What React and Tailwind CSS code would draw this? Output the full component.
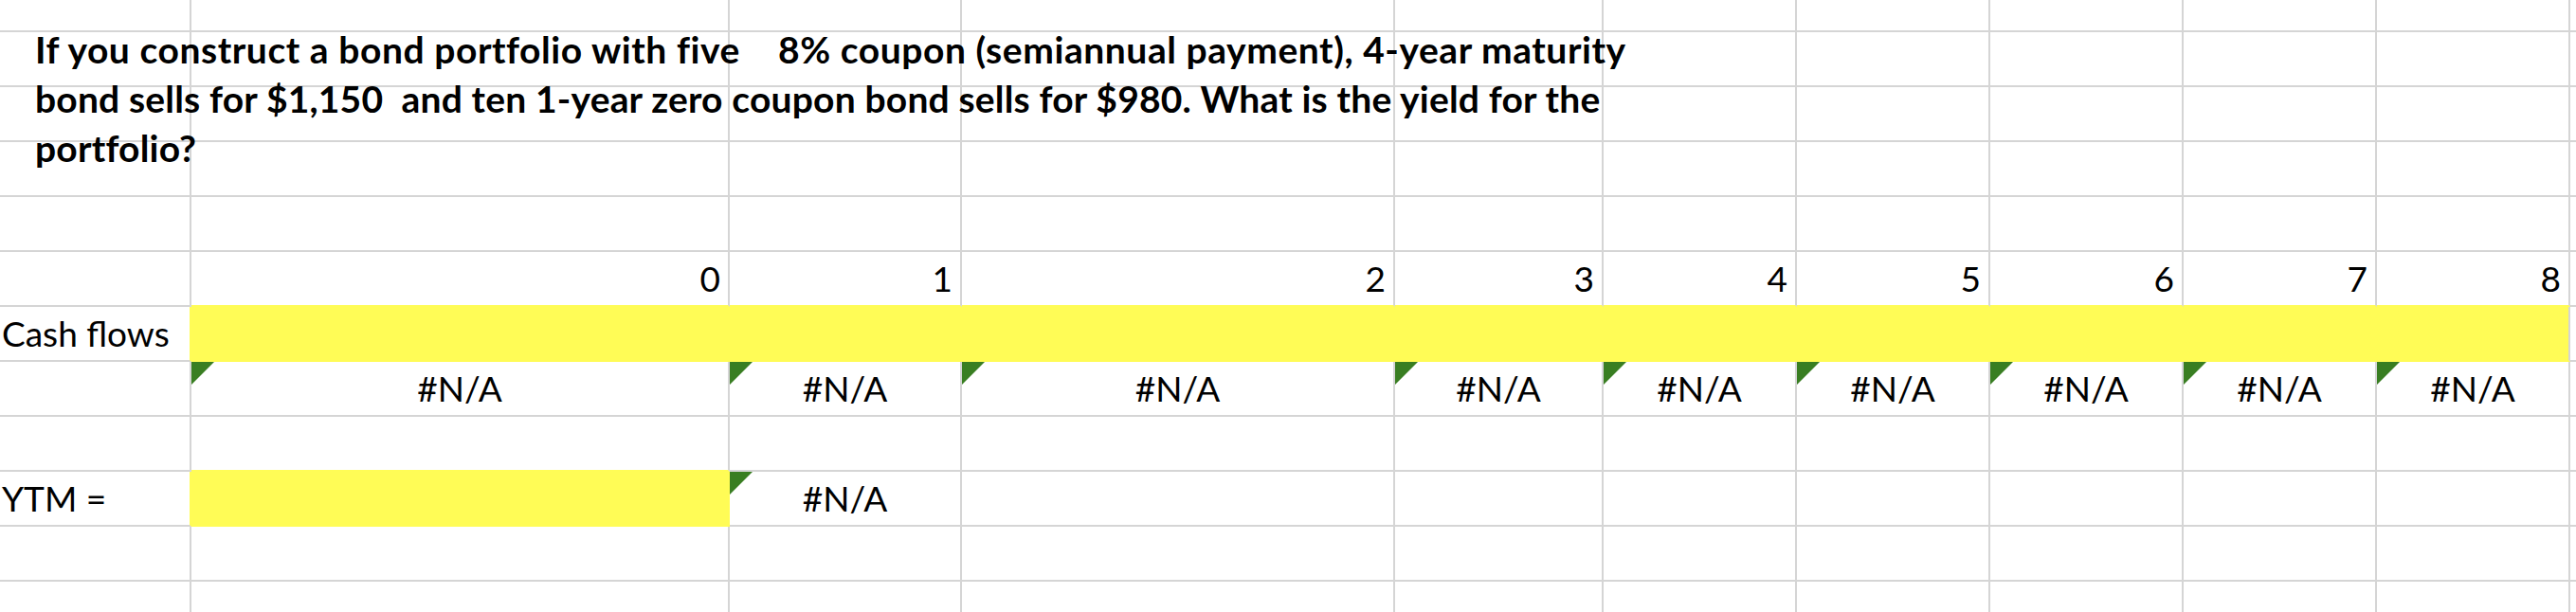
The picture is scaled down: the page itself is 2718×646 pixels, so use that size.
import React from "react";

// column widths include the 2px right gridline
const COLS = 11;
const ROWS = 12;

const title = [
  { text: "If you construct a bond portfolio with five    8% coupon (semiannual payment), 4-year maturity", cls: "tracking-[0.56px]" },
  { text: "bond sells for $1,150  and ten 1-year zero coupon bond sells for $980. What is the yield for the", cls: "tracking-[0.18px]" },
  { text: "portfolio?", cls: "tracking-[0.2px]" },
];

function Flag() {
  return (
    <svg className="absolute left-0 top-0" width="24" height="24" viewBox="0 0 24 24">
      <polygon points="0,0 24,0 0,24" fill="#397e22" />
    </svg>
  );
}

function cellFor(r, c) {
  const cell = { text: null, align: "left", yellow: false, flag: false, rYellow: false, bYellow: false };
  // period numbers
  if (r === 5 && c >= 1 && c <= 9) {
    cell.text = String(c - 1);
    cell.align = "right";
    cell.bYellow = true;
  }
  if (r === 6) {
    if (c === 0) {
      cell.text = "Cash flows";
      cell.rYellow = true;
    }
    if (c >= 1 && c <= 9) {
      cell.yellow = true;
      cell.bYellow = true;
      cell.rYellow = c !== 9;
    }
  }
  if (r === 7 && c >= 1 && c <= 9) {
    cell.text = "#N/A";
    cell.align = "center";
    cell.flag = true;
  }
  if (r === 8 && c === 1) cell.bYellow = true;
  if (r === 9) {
    if (c === 0) {
      cell.text = "YTM =";
      cell.rYellow = true;
    }
    if (c === 1) {
      cell.yellow = true;
      cell.rYellow = true;
      cell.bYellow = true;
    }
    if (c === 2) {
      cell.text = "#N/A";
      cell.align = "center";
      cell.flag = true;
    }
  }
  return cell;
}

function Cell({ r, c }) {
  const cell = cellFor(r, c);
  const lastCol = c === COLS - 1;
  const lastRow = r === ROWS - 1;
  const justify =
    cell.align === "right" ? "justify-end pr-[8px]" : cell.align === "center" ? "justify-center" : "justify-start pl-[2px]";
  return (
    <div
      className={[
        "relative flex items-end pb-[10px] overflow-visible whitespace-nowrap",
        justify,
        lastCol ? "" : "border-r-2",
        lastRow ? "" : "border-b-2",
        cell.rYellow ? "border-r-[#fffc56]" : "border-r-[#d5d5d5]",
        cell.bYellow ? "border-b-[#fffc56]" : "border-b-[#d5d5d5]",
        cell.yellow ? "bg-[#fffc56]" : "bg-white",
      ].join(" ")}
    >
      {cell.flag && <Flag />}
      {cell.text && <span className="text-[37px] leading-none">{cell.text}</span>}
    </div>
  );
}

export default function App() {
  const cells = [];
  for (let r = 0; r < ROWS; r++) {
    for (let c = 0; c < COLS; c++) {
      cells.push(<Cell key={r + "-" + c} r={r} c={c} />);
    }
  }
  return (
    <div className="relative w-[2718px] h-[646px] overflow-hidden bg-white text-black font-['Lato',sans-serif]">
      <div className="grid grid-cols-[202px_568px_245px_457px_220px_204px_204px_204px_204px_204px_6px] grid-rows-[34px_58px_58px_58px_58px_58px_58px_58px_58px_58px_58px_32px]">
        {cells}
      </div>
      {/* wrapped question text spills over the grid */}
      <div className="absolute left-[37px] top-[26px] text-[39px] leading-[52px] font-bold whitespace-pre">
        {title.map((t, i) => (
          <div key={i} className={t.cls}>{t.text}</div>
        ))}
      </div>
    </div>
  );
}
